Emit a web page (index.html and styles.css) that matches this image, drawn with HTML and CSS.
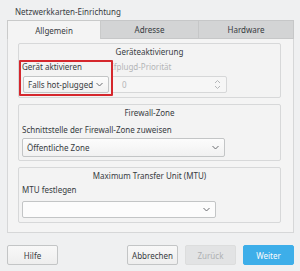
FILE: index.html
```html
<!DOCTYPE html>
<html>
<head>
<meta charset="utf-8">
<link rel="stylesheet" href="styles.css">
</head>
<body>
<div class="window">
  <div class="title">Netzwerkkarten-Einrichtung</div>
  <div class="tabs">
    <div class="tab active">Allgemein</div>
    <div class="tab">Adresse</div>
    <div class="tab">Hardware</div>
  </div>
  <div class="panel">
    <div class="group g1">
      <div class="gtitle">Geräteaktivierung</div>
      <div class="cols">
        <div class="col c1">
          <div class="label">Gerät aktivieren</div>
          <div class="combo w1"><span>Falls hot-plugged</span><svg class="chev" width="7" height="5" viewBox="0 0 7 5"><path d="M0.5 1 L3.5 4 L6.5 1" fill="none" stroke="#6a6d70" stroke-width="1"/></svg></div>
        </div>
        <div class="col c2">
          <div class="label dim">Ifplugd-Priorität</div>
          <div class="spin"><span>0</span><svg class="updown" width="7" height="11" viewBox="0 0 7 11"><path d="M1 4 L3.5 1.5 L6 4 M1 7 L3.5 9.5 L6 7" fill="none" stroke="#b4b6b8" stroke-width="1"/></svg></div>
        </div>
      </div>
      <div class="highlight"></div>
    </div>
    <div class="group g2">
      <div class="gtitle">Firewall-Zone</div>
      <div class="label">Schnittstelle der Firewall-Zone zuweisen</div>
      <div class="combo w2"><span>Öffentliche Zone</span><svg class="chev" width="7" height="5" viewBox="0 0 7 5"><path d="M0.5 1 L3.5 4 L6.5 1" fill="none" stroke="#6a6d70" stroke-width="1"/></svg></div>
    </div>
    <div class="group g3">
      <div class="gtitle">Maximum Transfer Unit (MTU)</div>
      <div class="label">MTU festlegen</div>
      <div class="combo w3 input"><span></span><svg class="chev" width="7" height="5" viewBox="0 0 7 5"><path d="M0.5 1 L3.5 4 L6.5 1" fill="none" stroke="#6a6d70" stroke-width="1"/></svg></div>
    </div>
  </div>
  <div class="footer">
    <div class="btn">Hilfe</div>
    <div class="spacer"></div>
    <div class="btn">Abbrechen</div>
    <div class="btn disabled">Zurück</div>
    <div class="btn primary">Weiter</div>
  </div>
</div>
</body>
</html>
```

FILE: styles.css
```css
* { box-sizing: border-box; }
html, body {
  margin: 0;
  padding: 0;
  width: 300px;
  height: 271px;
  overflow: hidden;
  background: #eff0f1;
  font-family: "Noto Sans", "Open Sans", sans-serif;
  font-size: 8px;
  color: #373b3f;
}
.window {
  padding: 0 6px 0 7px;
}
.title {
  height: 20px;
  padding: 6px 0 0 8px;
  line-height: 11px;
}
.tabs {
  display: grid;
  grid-template-columns: 94px 98px 95px;
  height: 19px;
}
.tab {
  display: flex;
  align-items: center;
  justify-content: center;
  background: #d3d4d5;
  border: 1px solid #c6c7c8;
  border-left: none;
}
.tab.active {
  background: #f4f4f4;
  border: 1px solid #c9caca;
  border-bottom: none;
}
.panel {
  height: 194px;
  background: #f4f4f4;
  border: 1px solid #d6d7d8;
  border-top: none;
  padding: 4px 12px 0 10px;
  display: flex;
  flex-direction: column;
  gap: 6px;
}
.group {
  position: relative;
  background: #f3f3f3;
  border: 1px solid #d7d8d9;
  border-radius: 2px;
  padding: 2px 3px 3px;
}
.gtitle {
  text-align: center;
  line-height: 12px;
  height: 12px;
}
.label {
  line-height: 12px;
  height: 12px;
  white-space: nowrap;
}
.label.dim { color: #b3b5b7; }
.g1 { height: 55px; }
.g1 .cols { display: flex; gap: 2px; margin-top: 3px; }
.g1 .label { margin-bottom: 3px; }
.c1 { width: 87px; }
.c2 { width: 116px; }
.g2 { height: 57px; }
.g2 .label { margin-top: 5px; margin-bottom: 2px; }
.g3 { height: 56px; }
.g3 .label { margin-top: 2px; margin-bottom: 5px; }
.combo, .spin {
  display: flex;
  align-items: center;
  justify-content: space-between;
  height: 17px;
  border: 1px solid #c3c5c6;
  border-radius: 2px;
  background: linear-gradient(#fcfcfc, #f1f1f1);
  padding: 0 5px 0 4px;
}
.w1 { width: 86px; margin-left: 1px; }
.w2 { width: 203px; height: 19px; }
.w3 { width: 194px; }
.input { background: #fcfcfc; }
.spin { background: #f6f6f6; border-color: #d6d7d8; color: #b3b5b7; padding-left: 10px; }
.chev { flex: none; }
.highlight {
  position: absolute;
  left: 0px;
  top: 16px;
  width: 94px;
  height: 36px;
  border: 2px solid #d5272d;
  border-radius: 1px;
}
.footer {
  display: flex;
  margin-top: 12px;
  gap: 7px;
}
.spacer { flex: 1; }
.btn {
  width: 51px;
  height: 20px;
  display: flex;
  align-items: center;
  justify-content: center;
  border: 1px solid #c3c5c6;
  border-radius: 2px;
  background: linear-gradient(#f8f8f8, #eeeeee);
}
.btn.disabled {
  background: #e2e3e4;
  border-color: #dcdddd;
  color: #aeb0b2;
}
.btn.primary {
  background: #3daee9;
  border-color: #3daee9;
  color: #fcfcfc;
}
```
